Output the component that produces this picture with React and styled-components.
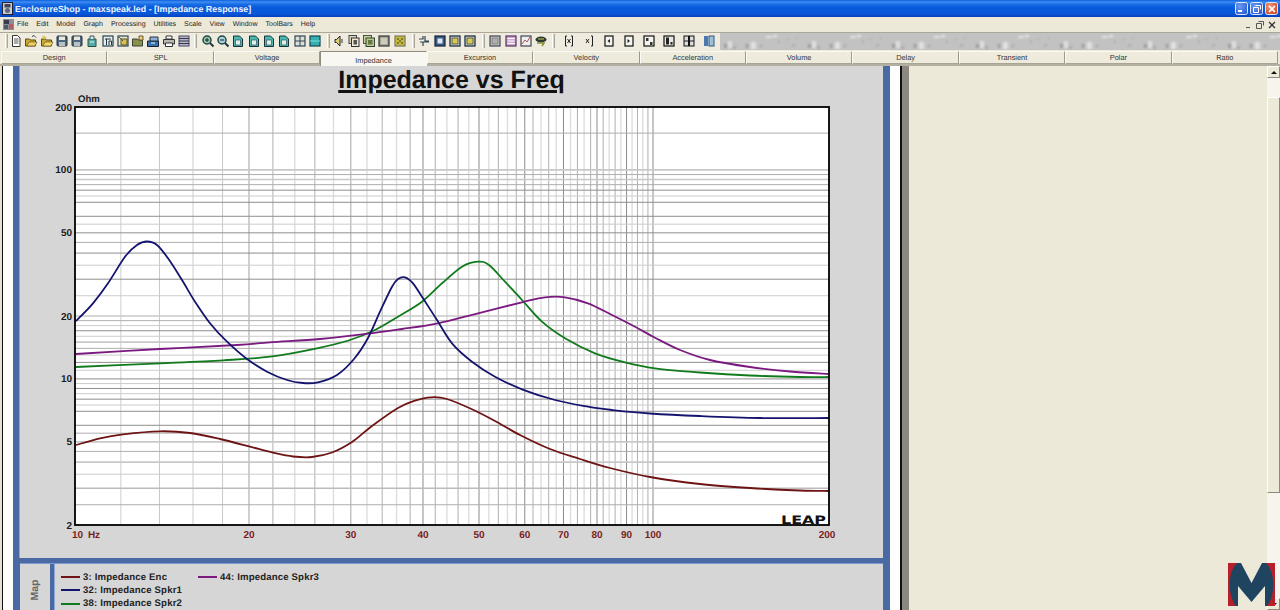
import React from "react";
import styled, { createGlobalStyle } from "styled-components";

const Global = createGlobalStyle`
  html, body { margin: 0; padding: 0; background: #ece9d8; }
  #root { width: 1280px; height: 610px; overflow: hidden; }
  * { text-rendering: geometricPrecision; }
`;

const sans = `"Liberation Sans", Arial, sans-serif`;

const Window = styled.div`
  position: relative;
  width: 1280px;
  height: 610px;
  display: flex;
  flex-direction: column;
  overflow: hidden;
  font-family: ${sans};
  background: #ece9d8;
`;

const TitleBar = styled.div`
  height: 17px;
  display: flex;
  align-items: center;
  padding: 0 2px 0 2px;
  background: linear-gradient(180deg, #0f5fdc 0, #3d8ff2 2px, #1d6fe6 4px, #0a5cdc 7px, #0658dc 12px, #0a56d6 14px, #0340c0 17px);
`;
const TitleText = styled.span`
  margin-left: 2px;
  flex: 1;
  color: #eef3ff;
  font-size: 8.9px;
  font-weight: 700;
  white-space: nowrap;
`;
const CapButton = styled.div`
  width: 13px;
  height: 13px;
  margin-left: 2px;
  border: 1px solid #dfe8fb;
  border-radius: 2.5px;
  box-sizing: border-box;
  display: flex;
  align-items: center;
  justify-content: center;
  background: ${(p) =>
    p.$close
      ? "radial-gradient(circle at 35% 30%, #ee9a80, #d8572f 70%, #c23f1d)"
      : "radial-gradient(circle at 35% 30%, #6e9cf0, #3466d8 75%, #2b57c4)"};
`;

const MenuBar = styled.div`
  height: 15px;
  display: flex;
  align-items: center;
  background: #ece9d8;
  padding: 0 3px 0 3px;
  box-sizing: border-box;
`;
const MenuItems = styled.div`
  margin-left: 3px;
  flex: 1;
  display: flex;
  gap: 8px;
`;
const MenuItem = styled.span`
  font-size: 7px;
  color: #222;
`;
const MdiButtons = styled.div`
  display: flex;
  gap: 4px;
  align-items: center;
  padding-right: 1px;
`;

const ToolRow = styled.div`
  height: 18px;
  display: flex;
  background: #ece9d8;
  border-top: 1px solid #aca899;
  box-sizing: border-box;
`;
const ToolGroups = styled.div`
  width: 720px;
  display: flex;
  padding-left: 5px;
  box-sizing: border-box;
  background: #efecdf;
`;
const Grip = styled.div`
  width: 3px;
  height: 14px;
  margin-top: 1px;
  border-left: 1px solid #fff;
  border-right: 1px solid #aca899;
  background: #d8d4c4;
  box-sizing: border-box;
  flex: none;
`;
const ToolGroup = styled.div`
  display: flex;
  align-items: center;
  width: ${(p) => p.$w}px;
  padding-left: ${(p) => p.$pad}px;
  box-sizing: border-box;
  height: 16px;
  gap: ${(p) => p.$gap}px;
`;
const Texture = styled.svg`
  flex: 1;
  height: 17px;
  display: block;
`;

const TabBar = styled.div`
  height: 16px;
  display: flex;
  padding: 1px 2px 0 1px;
  box-sizing: border-box;
  background: #ece9d8;
  border-bottom: 2px solid #b3b0a2;
`;
const Tab = styled.div`
  flex: 1;
  height: ${(p) => (p.$active ? "15px" : "13px")};
  display: flex;
  align-items: center;
  justify-content: center;
  font-size: 7.4px;
  color: #333;
  box-sizing: border-box;
  background: ${(p) => (p.$active ? "#f8f7f1" : "#efebdc")};
  padding-top: ${(p) => (p.$active ? "3px" : "0")};
  border-top: 1px solid ${(p) => (p.$active ? "#8f8c7e" : "#fbfaf4")};
  border-left: 1px solid ${(p) => (p.$active ? "#8f8c7e" : "#fbfaf4")};
  border-right: 1px solid ${(p) => (p.$active ? "#f8f7f1" : "#9c998a")};
  border-bottom: ${(p) => (p.$active ? "none" : "1px solid #a8a596")};
  position: relative;
  z-index: ${(p) => (p.$active ? 1 : 0)};
`;

const Body = styled.div`
  flex: 1;
  min-height: 0;
  display: flex;
`;
const LeftEdge = styled.div`
  width: 2px;
  background: #e4e1d2;
`;
const LeftGutter = styled.div`
  width: 11px;
  box-sizing: border-box;
  background: #fff;
  border-left: 1.5px solid #111;
`;
const Panes = styled.div`
  width: 877px;
  display: flex;
  flex-direction: column;
  background: #4a6aa4;
  padding: 0 7px;
  box-sizing: border-box;
`;
const ChartPane = styled.div`
  height: 492px;
  background: #d6d6d6;
  border-left: 1px solid #8fa7d6;
  margin-left: -1px;
  display: flex;
  flex-direction: column;
  align-items: center;
  overflow: hidden;
`;
const ChartTitle = styled.h1`
  margin: 0;
  height: 28px;
  line-height: 29px;
  font-size: 25px;
  font-weight: 700;
  color: #111;
  font-family: ${sans};
  text-decoration: underline;
  text-decoration-thickness: 3px;
  text-underline-offset: 2px;
  white-space: nowrap;
`;
const ChartSvg = styled.svg`
  display: block;
  flex: none;
`;
const Divider = styled.div`
  height: 6px;
  background: #4a6aa4;
  border-bottom: 1px solid #7e9ad0;
  box-sizing: border-box;
  flex: none;
`;
const MapRow = styled.div`
  flex: 1;
  display: flex;
  min-height: 0;
`;
const MapTab = styled.div`
  width: 30px;
  background: #d6d6d6;
  display: flex;
  align-items: center;
  justify-content: center;
  padding: 6px 2px 0 0;
  box-sizing: border-box;
`;
const MapLabel = styled.span`
  transform: rotate(-90deg);
  font-size: 10.5px;
  font-weight: 700;
  color: #666;
`;
const MapSplit = styled.div`
  width: 4px;
  background: #4a6aa4;
`;
const Legend = styled.div`
  flex: 1;
  background: #d6d6d6;
  border-left: 1px solid #8fa7d6;
  display: grid;
  grid-auto-flow: column;
  grid-template-rows: repeat(3, 13.3px);
  grid-auto-columns: 137px;
  padding: 6.5px 0 0 6px;
  align-content: start;
`;
const LegendItem = styled.div`
  display: flex;
  align-items: center;
  font-size: 9.6px;
  font-weight: 700;
  color: #222;
  letter-spacing: 0.16px;
  white-space: nowrap;
`;
const Swatch = styled.span`
  width: 19px;
  height: 2px;
  margin-right: 3px;
  flex: none;
  background: ${(p) => p.$color};
`;

const RightGutter = styled.div`
  width: 10px;
  background: #fff;
`;
const Splitter = styled.div`
  width: 9px;
  box-sizing: border-box;
  background: #8b8880;
  border-left: 2px solid #111;
`;
const SidePanel = styled.div`
  flex: 1;
  background: #ece9d8;
`;
const ScrollBar = styled.div`
  width: 13px;
  background: #f6f4ec;
  display: flex;
  flex-direction: column;
`;
const ScrollBtn = styled.div`
  height: 12px;
  box-sizing: border-box;
  background: #ece9d8;
  border: 1px solid;
  border-color: #fff #8d8a7e #8d8a7e #fff;
  display: flex;
  align-items: center;
  justify-content: center;
  flex: none;
`;
const Arrow = styled.span`
  width: 0;
  height: 0;
  border-left: 3px solid transparent;
  border-right: 3px solid transparent;
  ${(p) => (p.$down ? "border-top: 3px solid #111;" : "border-bottom: 3px solid #111;")}
`;
const ScrollGap = styled.div`
  height: ${(p) => p.$h}px;
  flex: ${(p) => (p.$h ? "none" : 1)};
`;
const ScrollThumb = styled.div`
  height: 396px;
  box-sizing: border-box;
  background: #ece9d8;
  border: 1px solid;
  border-color: #fff #8d8a7e #8d8a7e #fff;
`;
const Watermark = styled.svg`
  position: absolute;
  left: 1228px;
  top: 563px;
`;

const AxisY = styled.text`
  font: 700 10px ${sans};
  fill: #1a1a1a;
  text-anchor: end;
`;
const AxisX = styled.text`
  font: 700 10px ${sans};
  fill: #7a1c1c;
  text-anchor: middle;
`;
const OhmLabel = styled.text`
  font: 700 9.6px ${sans};
  fill: #222;
`;
const LeapMark = styled.text`
  font: 900 11.5px "DejaVu Sans", sans-serif;
  fill: #111;
`;

/* ---------- toolbar icons ---------- */
function Icon({ k }) {
  const S = (c) => <svg width="14" height="14" viewBox="0 0 14 14">{c}</svg>;
  const framed = (fill, stroke, inner) => S(
    <>
      <rect x="2" y="2" width="10" height="10" fill={fill} stroke={stroke} strokeWidth="1.2" />
      {inner}
    </>
  );
  switch (k) {
    case "page":
      return S(<>
        <path d="M3.5 1.5h5l2.5 2.5v8.500h-7.500z" fill="#fff" stroke="#333" />
        <path d="M5 5h4.500M5 7h4.500M5 9h4.500" stroke="#555" />
      </>);
    case "folder":
      return S(<>
        <path d="M1.500 5h4l1 1h5v6h-10z" fill="#c8a838" stroke="#5b4a12" />
        <path d="M3 12l2-4h8l-2 4z" fill="#f0d060" stroke="#5b4a12" strokeWidth=".6" />
        <path d="M8 2.500l2-1 2 2" fill="none" stroke="#444" />
      </>);
    case "folderStar":
      return S(<>
        <path d="M1.500 5h4l1 1h5v6h-10z" fill="#c8a838" stroke="#5b4a12" />
        <path d="M3 12l2-4h8l-2 4z" fill="#f3d768" stroke="#5b4a12" strokeWidth=".6" />
        <path d="M4 1l1 2 2 .5-2 1-1 1-.5-2-2-.5 2-1z" fill="#d8c040" />
      </>);
    case "save":
      return S(<>
        <rect x="2" y="2" width="10" height="10" rx="1" fill="#4d6780" stroke="#233" />
        <rect x="4" y="2.500" width="6" height="3.500" fill="#e8e8e0" />
        <rect x="4" y="8" width="6" height="4" fill="#b8c0c8" />
      </>);
    case "saveTeal":
      return S(<>
        <path d="M3 5h8v7.500h-8z" fill="#5ba8a8" stroke="#254" />
        <path d="M5 5V2h4v3" fill="#d8e8e8" stroke="#456" />
        <path d="M5 8h4" stroke="#dff" />
      </>);
    case "t14":
      return framed("#e8eee8", "#245", <path d="M4 5h6M5.500 5v6M8 7v4M8 7h2.500v4" stroke="#234" fill="none" />);
    case "star":
      return framed("#e8e8d0", "#345", <path d="M5 5h6v6h-6z M3 3l4 4" fill="#d8c050" stroke="#553" />);
    case "folderGreen":
      return S(<>
        <path d="M1.500 5h5l1 1h4v6h-10z" fill="#8a9048" stroke="#343" />
        <path d="M8 2h4v4h-4z" fill="#f0d868" stroke="#654" />
      </>);
    case "floppyBlue":
      return S(<>
        <path d="M1.500 7h11v5.500h-11z" fill="#3d70b0" stroke="#123" />
        <path d="M4 3h8v4h-8z" fill="#8fb0d8" stroke="#234" />
        <path d="M5 9h4" stroke="#dfe" />
      </>);
    case "print":
      return S(<>
        <path d="M4 2h6v3h-6z" fill="#fff" stroke="#333" />
        <path d="M1.500 5.500h11v4.500h-11z" fill="#b8b8b0" stroke="#333" />
        <path d="M3.500 9h7v3.500h-7z" fill="#fff" stroke="#333" />
      </>);
    case "list":
      return S(<>
        <rect x="2" y="2" width="10" height="10" fill="#b8b8d0" stroke="#446" />
        <path d="M2 4.500h10M2 7h10M2 9.500h10" stroke="#334" />
      </>);
    case "zoomIn":
    case "zoomOut":
      return S(<>
        <circle cx="6" cy="6" r="4" fill={k === "zoomIn" ? "#9cc8a8" : "#a8d0d8"} stroke="#1d4a48" strokeWidth="1.500" />
        <path d="M9 9l3.500 3.500" stroke="#234" strokeWidth="2" />
        <path d={k === "zoomIn" ? "M4 6h4M6 4v4" : "M4 6h4"} stroke="#123" />
      </>);
    case "doc":
      return S(<>
        <path d="M2.500 2h6l3 3v7.500h-9z" fill="#4fb8b0" stroke="#133" />
        <rect x="4.500" y="6" width="5" height="5" fill="#dff0e8" stroke="#245" strokeWidth=".6" />
      </>);
    case "gridGray":
      return framed("#d8e0d8", "#345", <path d="M7 2v10M2 7h10" stroke="#345" />);
    case "tealBox":
      return framed("#35b0b0", "#145", <path d="M2 7h10" stroke="#7dd" />);
    case "speaker":
      return S(<>
        <path d="M8 2L4.500 5.500H3v3h1.500L8 12z" fill="#e0d070" stroke="#222" />
        <path d="M10 5v4" stroke="#333" />
      </>);
    case "stackDoc":
      return S(<>
        <rect x="2" y="1.500" width="7.500" height="8" fill="#d8d8c0" stroke="#444" />
        <rect x="4.500" y="4" width="7.500" height="8.500" fill="#f0ead0" stroke="#333" />
        <rect x="6.500" y="6" width="3.500" height="4.500" fill="#555" />
      </>);
    case "stackGreen":
      return S(<>
        <rect x="1.500" y="1.500" width="8" height="8" fill="#c8d0a0" stroke="#454" />
        <rect x="4" y="4" width="8.500" height="8.500" fill="#b8c890" stroke="#343" />
        <rect x="6" y="6" width="4.500" height="4.500" fill="#667744" />
      </>);
    case "grayBox":
      return framed("#a8a890", "#333", <path d="M4 5h6M4 7h6M4 9h6" stroke="#eee" />);
    case "checker":
      return framed("#c8b838", "#776", <path d="M4 4h2v2h-2zM8 4h2v2h-2zM6 6h2v2h-2zM4 8h2v2h-2zM8 8h2v2h-2z" fill="#7a8038" />);
    case "cross":
      return S(<path d="M2 5h4V2M8 2v5h4M6 12V8h6M3 8h3" fill="none" stroke="#345" strokeWidth="1.200" />);
    case "navyBox":
      return framed("#3a5a88", "#123", <rect x="4.500" y="4.500" width="5" height="5" fill="#dfe6f0" />);
    case "yellowBox":
      return framed("#d8d8c8", "#123", <rect x="4" y="4" width="6" height="6" fill="#d8cc50" stroke="#234" strokeWidth=".7" />);
    case "grayRect":
      return framed("#c8c8c0", "#445", <rect x="4" y="4" width="6" height="6" fill="#b0b0a8" stroke="#667" strokeWidth=".6" />);
    case "purpleList":
      return framed("#d0a8d0", "#536", <path d="M3.500 4.500h7M3.500 7h7M3.500 9.500h7" stroke="#fff" />);
    case "graph":
      return framed("#eee", "#445", <path d="M3 10l3-4 2 2 3-5" stroke="#a55" fill="none" />);
    case "arrow":
      return S(<>
        <ellipse cx="7" cy="5.500" rx="5.500" ry="3" fill="#2e3a30" />
        <path d="M3 9h7l-2 3" stroke="#889030" fill="none" strokeWidth="1.500" />
        <path d="M4 5h6" stroke="#c0c860" />
      </>);
    case "b1":
      return S(<path d="M5 2H3.500v10H5M9 2h1.500v10H9M5.500 5l3 4M8.500 5l-3 4" fill="none" stroke="#222" />);
    case "b2":
      return S(<path d="M9 2h1.500v10H9M4 5l3 4M7 5l-3 4" fill="none" stroke="#222" />);
    case "b3":
      return S(<><rect x="3" y="2" width="8" height="10" fill="#f4f4ee" stroke="#111" strokeWidth="1.200" /><path d="M8 5L5.500 7 8 9z" fill="#222" /></>);
    case "b4":
      return S(<><rect x="3" y="2" width="8" height="10" fill="#f4f4ee" stroke="#111" strokeWidth="1.200" /><path d="M5.500 5L8 7 5.500 9z" fill="#222" /></>);
    case "b5":
      return S(<><rect x="2" y="2" width="10" height="10" fill="#f4f4ee" stroke="#111" strokeWidth="1.200" /><path d="M4 4h2.500v3H4zM8 8h2.500v3H8z" fill="#333" /></>);
    case "b6":
      return S(<><rect x="2" y="2" width="10" height="10" fill="#e8e8e0" stroke="#111" strokeWidth="1.200" /><path d="M4 3.500h3v7H4zM8.500 8h2v2.500h-2z" fill="#222" /></>);
    case "b7":
      return S(<><rect x="2" y="2" width="4.500" height="10" fill="#ddd" stroke="#111" /><rect x="7.500" y="2" width="4.500" height="10" fill="#ddd" stroke="#111" /><path d="M2 7h4M8 7h4" stroke="#222" /></>);
    case "b8":
      return S(<><rect x="2" y="2" width="4" height="10" fill="#4a78b0" /><rect x="7" y="2" width="5" height="10" fill="#9cc0e0" stroke="#357" /></>);
    default:
      return S(null);
  }
}

const toolGroups = [
  { w: 186, pad: 1, gap: 1.28, icons: ["page", "folder", "folderStar", "save", "save", "saveTeal", "t14", "star", "folderGreen", "floppyBlue", "print", "list"] },
  { w: 130, pad: 4, gap: 1.35, icons: ["zoomIn", "zoomOut", "doc", "doc", "doc", "doc", "gridGray", "tealBox"] },
  { w: 83, pad: 2, gap: 1.3, icons: ["speaker", "stackDoc", "stackGreen", "grayBox", "checker"] },
  { w: 67, pad: 2, gap: 1.3, icons: ["cross", "navyBox", "yellowBox", "yellowBox"] },
  { w: 67, pad: 3, gap: 1.3, icons: ["grayRect", "purpleList", "graph", "arrow"] },
  { w: 165, pad: 7, gap: 6, icons: ["b1", "b2", "b3", "b4", "b5", "b6", "b7", "b8"] },
];

const menus = ["File", "Edit", "Model", "Graph", "Processing", "Utilities", "Scale", "View", "Window", "ToolBars", "Help"];
const tabs = ["Design", "SPL", "Voltage", "Impedance", "Excursion", "Velocity", "Acceleration", "Volume", "Delay", "Transient", "Polar", "Ratio"];

/* ---------- chart ---------- */
const X0 = 75, X1 = 829, Y0 = 107, Y1 = 525;
const fx = (f) => X0 + 578 * Math.log10(f / 10);
const fy = (v) => Y0 + 209 * Math.log10(200 / v);

const vStyle = (f, i) => {
  if (f === 20) return ["#c4c4c4", 1.6];
  if (f === 30) return ["#b4b4b4", 1.2];
  if (f % 10 === 0) return ["#8c8c8c", 1];
  if (f < 20) return i % 2 ? ["#c8c8c8", 1] : ["#dcdcdc", 1.4];
  return i % 2 ? ["#b0b0b0", 1] : ["#dedede", 1.4];
};
const vLines = [];
for (let f = 12; f <= 100; f += 2) vLines.push(f);

const hDark = ["#8e8e8e", 1];
const hMid = ["#aeaeae", 1];
const hLight = ["#cccccc", 1];
const hThick = ["#c8c8c8", 1.6];
const hLines = [
  [150, hMid], [100, hThick], [95, hMid], [90, hThick], [85, hMid], [80, hDark], [75, hLight], [70, hDark], [60, hDark], [55, hLight],
  [50, hDark], [45, hMid], [40, hDark], [35, hLight], [30, hDark], [25, hLight],
  [20, hThick], [19, hMid], [18, hLight], [17, hDark], [16, hLight], [15, hThick], [14, hMid], [13, hLight], [12, hDark], [11, hLight], [10, hDark],
  [9.5, hLight], [9, hDark], [8.5, hLight], [8, hDark], [7.5, hLight], [7, hDark], [6, hDark], [5.5, hMid],
  [5, hThick], [4.5, hMid], [4, hThick], [3.5, hLight], [3, ["#bbbbbb", 1.6]], [2.5, hMid],
];

function smooth(pts) {
  let d = `M${pts[0][0]} ${pts[0][1]}`;
  for (let i = 0; i < pts.length - 1; i++) {
    const p0 = pts[i - 1] || pts[i];
    const p1 = pts[i];
    const p2 = pts[i + 1];
    const p3 = pts[i + 2] || p2;
    const c1x = p1[0] + (p2[0] - p0[0]) / 6;
    const c1y = p1[1] + (p2[1] - p0[1]) / 6;
    const c2x = p2[0] - (p3[0] - p1[0]) / 6;
    const c2y = p2[1] - (p3[1] - p1[1]) / 6;
    d += `C${c1x.toFixed(1)} ${c1y.toFixed(1)} ${c2x.toFixed(1)} ${c2y.toFixed(1)} ${p2[0]} ${p2[1]}`;
  }
  return d;
}

const curves = [
  { color: "#6e1414", pts: [[76,445],[100,438.3],[123,434.3],[160,431.3],[190,433],[220,439],[250,446.7],[273,452.7],[293,456.5],[312,457],[332,452.5],[352,442],[372,426],[398,408],[415,400.7],[431,397.3],[447,399],[472,409.3],[495,421],[520,435],[550,449],[580,459],[610,468],[650,477],[700,484],[750,488],[800,490.5],[829,491]] },
  { color: "#117a1c", pts: [[76,367],[160,363.3],[223,360.3],[270,356.7],[317,348.3],[350,340],[375,330],[398,316.7],[422,301.7],[442,283.3],[462,266.7],[478,261.7],[489,265],[505,281.7],[522,300],[542,321.7],[565,338.3],[595,353.3],[625,362.3],[655,368.3],[700,372.5],[750,375.5],[800,377],[829,377]] },
  { color: "#7a1a80", pts: [[76,354],[160,349],[237,345],[270,342.3],[320,339],[368,333.7],[402,329],[438,323.3],[478,313.3],[522,302.3],[545,297.3],[565,297.3],[588,303.3],[612,315],[635,326.7],[655,337.7],[680,350],[710,360],[750,367],[790,371.5],[829,374]] },
  { color: "#14146e", pts: [[76,321],[93,303.3],[108,283.3],[125,256.7],[137,245],[147,241.5],[157,245],[168,258.3],[182,280],[195,301.7],[210,323.3],[227,341.7],[247,359],[267,371.7],[287,380],[303,383],[318,382.3],[337,375],[354,359],[368,338],[380,311.7],[392,286.7],[398,279],[405,277.3],[413,283.3],[423,298.3],[437,320],[452,343.3],[472,361.7],[495,376.7],[522,389.3],[555,400],[588,406.7],[612,410],[650,413.5],[700,416],[760,418],[829,418]] },
];

const yLabels = [200, 100, 50, 20, 10, 5, 2];
const xLabels = [20, 30, 40, 50, 60, 70, 80, 90, 100, 200];

function Chart() {
  return (
    <ChartSvg width="863" height="464" viewBox="20 94 863 464">
      <rect x={X0} y={Y0} width={X1 - X0} height={Y1 - Y0} fill="#fff" />
      {vLines.map((f, i) => {
        const [stroke, w] = vStyle(f, i);
        return <line key={f} x1={fx(f)} x2={fx(f)} y1={Y0} y2={Y1} stroke={stroke} strokeWidth={w} />;
      })}
      {hLines.map(([v, [stroke, w]]) => (
        <line key={v} x1={X0} x2={X1} y1={fy(v)} y2={fy(v)} stroke={stroke} strokeWidth={w} />
      ))}
      {curves.map((c) => (
        <path key={c.color} d={smooth(c.pts)} fill="none" stroke={c.color} strokeWidth="1.8" />
      ))}
      <rect x={X0} y={Y0} width={X1 - X0} height={Y1 - Y0} fill="none" stroke="#000" strokeWidth="1.8" />
      <LeapMark x="781" y="523.500" textLength="45" lengthAdjust="spacingAndGlyphs">LEAP</LeapMark>
      {yLabels.map((v) => (
        <AxisY key={v} x="72" y={fy(v) + 3.500}>{v}</AxisY>
      ))}
      <OhmLabel x="78" y="102">Ohm</OhmLabel>
      <AxisX x="77.500" y="538">10</AxisX>
      <AxisX x="94" y="538">Hz</AxisX>
      {xLabels.map((f) => (
        <AxisX key={f} x={fx(f)} y="538">{f}</AxisX>
      ))}
    </ChartSvg>
  );
}

const blotches = [
  [6, 11, 3, 4, "#9a9a9a"], [10, 8, 4, 7, "#dedede"], [15, 13, 3, 3, "#a8a8a8"], [28, 11, 2, 4, "#929292"],
  [33, 9, 5, 7, "#e2e2e2"], [42, 12, 2, 2, "#a0a0a0"], [48, 3, 6, 2, "#e4e4e4"], [55, 2, 4, 2, "#e8e8e8"],
  [60, 8, 1.500, 1.500, "#959595"], [68, 6, 2, 1, "#a8a8a8"], [74, 11, 3, 3, "#b0b0b0"], [78, 4, 1.500, 1.500, "#a0a0a0"],
];

export default function App() {
  return (
    <Window>
      <Global />
      <TitleBar>
        <svg width="11" height="13" viewBox="0 0 11 13">
          <rect x=".5" y=".5" width="10" height="12" fill="#c9ccd6" stroke="#223" />
          <rect x="2.500" y="2" width="6" height="3.500" fill="#445" />
          <circle cx="5.500" cy="8.500" r="2.500" fill="#667" />
        </svg>
        <TitleText>EnclosureShop - maxspeak.led - [Impedance Response]</TitleText>
        <CapButton>
          <svg width="7" height="7" viewBox="0 0 7 7"><rect x="0" y="5" width="4" height="2" fill="#fff" /></svg>
        </CapButton>
        <CapButton>
          <svg width="8" height="8" viewBox="0 0 8 8"><path d="M2.500 .5h5v4M.5 2.500h5v5h-5z" fill="none" stroke="#fff" /></svg>
        </CapButton>
        <CapButton $close>
          <svg width="8" height="8" viewBox="0 0 8 8"><path d="M1 1l6 6M7 1L1 7" stroke="#fff" strokeWidth="1.600" /></svg>
        </CapButton>
      </TitleBar>

      <MenuBar>
        <svg width="11" height="11" viewBox="0 0 11 11">
          <rect width="11" height="11" fill="#8c8c98" />
          <rect x="1" y="1" width="5" height="4" fill="#3a3a48" />
          <rect x="6" y="5" width="4" height="5" fill="#b06060" />
          <rect x="1" y="6" width="4" height="4" fill="#4a5a68" />
        </svg>
        <MenuItems>
          {menus.map((m) => <MenuItem key={m}>{m}</MenuItem>)}
        </MenuItems>
        <MdiButtons>
          <svg width="7" height="8" viewBox="0 0 7 8"><rect x="1" y="6" width="4" height="1" fill="#555" /></svg>
          <svg width="8" height="8" viewBox="0 0 8 8"><path d="M2.500 .5h5v4M.5 2.500h5v5h-5z" fill="none" stroke="#555" /></svg>
          <svg width="8" height="8" viewBox="0 0 8 8"><path d="M1 1l6 6M7 1L1 7" stroke="#333" strokeWidth="1.300" /></svg>
        </MdiButtons>
      </MenuBar>

      <ToolRow>
        <ToolGroups>
          {toolGroups.map((g, i) => (
            <React.Fragment key={i}>
              <Grip />
              <ToolGroup $w={g.w} $pad={g.pad} $gap={g.gap}>
                {g.icons.map((k, j) => <Icon key={j} k={k} />)}
              </ToolGroup>
            </React.Fragment>
          ))}
        </ToolGroups>
        <Texture>
          <defs>
            <filter id="soft" x="-10%" y="-10%" width="120%" height="120%">
              <feGaussianBlur stdDeviation="0.9" />
            </filter>
            <pattern id="tx" width="84" height="17" patternUnits="userSpaceOnUse" x="-2">
              <rect width="84" height="17" fill="#c2c2c2" />
              <g filter="url(#soft)">
                {blotches.map((b, i) => (
                  <rect key={i} x={b[0]} y={b[1]} width={b[2]} height={b[3]} fill={b[4]} />
                ))}
              </g>
            </pattern>
          </defs>
          <rect width="100%" height="100%" fill="url(#tx)" />
        </Texture>
      </ToolRow>

      <TabBar>
        {tabs.map((t) => <Tab key={t} $active={t === "Impedance"}>{t}</Tab>)}
      </TabBar>

      <Body>
        <LeftEdge />
        <LeftGutter />
        <Panes>
          <ChartPane>
            <ChartTitle>Impedance vs Freq</ChartTitle>
            <Chart />
          </ChartPane>
          <Divider />
          <MapRow>
            <MapTab><MapLabel>Map</MapLabel></MapTab>
            <MapSplit />
            <Legend>
              <LegendItem><Swatch $color="#6e1414" />3: Impedance Enc</LegendItem>
              <LegendItem><Swatch $color="#14146e" />32: Impedance Spkr1</LegendItem>
              <LegendItem><Swatch $color="#117a1c" />38: Impedance Spkr2</LegendItem>
              <LegendItem><Swatch $color="#7a1a80" />44: Impedance Spkr3</LegendItem>
            </Legend>
          </MapRow>
        </Panes>
        <RightGutter />
        <Splitter />
        <SidePanel />
        <ScrollBar>
          <ScrollBtn><Arrow /></ScrollBtn>
          <ScrollGap $h={19} />
          <ScrollThumb />
          <ScrollGap />
          <ScrollBtn><Arrow $down /></ScrollBtn>
        </ScrollBar>
      </Body>

      <Watermark width="47" height="43" viewBox="0 0 47 43">
        <rect x="0" y="0" width="9" height="43" fill="#b5202a" />
        <rect x="38" y="0" width="9" height="43" fill="#b5202a" />
        <path d="M9 0C0 8-1 32 8 43h2V23l13.500 16L37 23v20h2C48 32 47 8 38 0h-4L23.500 20 13 0z" fill="#1f4460" />
      </Watermark>
    </Window>
  );
}
